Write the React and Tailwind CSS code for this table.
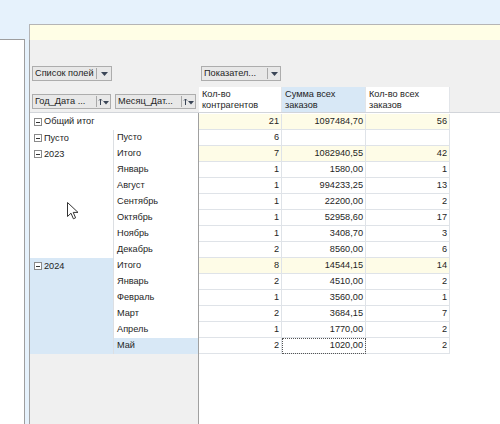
import React from "react";

const groups = [
  { year: "Пусто", months: ["Пусто"] },
  { year: "2023", minus: true, months: ["Итого", "Январь", "Август", "Сентябрь", "Октябрь", "Ноябрь", "Декабрь"] },
  { year: "2024", minus: true, active: true, months: ["Итого", "Январь", "Февраль", "Март", "Апрель", "Май"] },
];

const data = [
  { a: "21", b: "1097484,70", c: "56", total: true },
  { a: "6", b: "", c: "" },
  { a: "7", b: "1082940,55", c: "42", total: true },
  { a: "1", b: "1580,00", c: "1" },
  { a: "1", b: "994233,25", c: "13" },
  { a: "1", b: "22200,00", c: "2" },
  { a: "1", b: "52958,60", c: "17" },
  { a: "1", b: "3408,70", c: "3" },
  { a: "2", b: "8560,00", c: "6" },
  { a: "8", b: "14544,15", c: "14", total: true },
  { a: "2", b: "4510,00", c: "2" },
  { a: "1", b: "3560,00", c: "1" },
  { a: "2", b: "3684,15", c: "7" },
  { a: "1", b: "1770,00", c: "2" },
  { a: "2", b: "1020,00", c: "2", focus: true },
];

function Minus() {
  return (
    <span className="w-[8px] h-[8px] border border-[#8a8a8a] bg-white flex items-center justify-center mr-[2px] shrink-0">
      <span className="w-[4px] h-[1px] bg-[#333]" />
    </span>
  );
}

function Caret() {
  return (
    <svg width="7" height="4" viewBox="0 0 7 4">
      <path d="M0 0h7L3.5 4z" fill="#3b4657" />
    </svg>
  );
}

function SortIcon() {
  return (
    <svg width="12" height="8" viewBox="0 0 12 8">
      <path d="M2.5 1v6M1 2.5l1.5-1.5 1.5 1.5" stroke="#3b4657" strokeWidth="1" fill="none" />
      <path d="M5 3h6L8 6.5z" fill="#3b4657" />
    </svg>
  );
}

function FieldButton({ label, width, sort, sepAt }) {
  return (
    <div className={`${width} h-[15px] flex items-center bg-[#e8e8e8] border border-[#adadad] text-[#1e1e1e]`}>
      <span className={`${sepAt} pl-[2px] truncate leading-[13px]`}>{label}</span>
      <span className="w-[1px] h-[11px] bg-[#a9a9a9]" />
      <span className="flex-1 flex items-center justify-center">{sort ? <SortIcon /> : <Caret />}</span>
    </div>
  );
}

function Cursor() {
  return (
    <svg className="absolute left-[67px] top-[202px]" width="12" height="18" viewBox="0 0 12 18">
      <path d="M0.5 0.5v14l3.5-3.3 2.4 5.6 2.2-1-2.4-5.4h4.8z" fill="white" stroke="#333" strokeWidth="1" />
    </svg>
  );
}

export default function App() {
  return (
    <div className="relative w-[500px] h-[424px] overflow-hidden bg-[#e6f2fc] flex flex-col text-[9.2px] text-[#1e1e1e]" style={{ fontFamily: '"Liberation Sans", Arial, sans-serif' }}>
      <div className="h-[24px] shrink-0" />
      <div className="flex-1 flex min-h-0">
        <div className="w-[25px] mt-[15px] bg-white border-t border-r border-[#9e9e9e]" />
        <div className="flex-1 ml-[4px] flex flex-col min-w-0">
          <div className="h-[16px] bg-[#fffee6] border-t border-l border-[#b5b5b5] shrink-0" />
          <div className="flex-1 bg-[#f0f0f0] border-l border-[#a3a3a3] flex flex-col min-h-0">
            {/* top buttons */}
            <div className="mt-[26px] h-[16px] flex">
              <div className="w-[169px] pl-[2px]">
                <FieldButton label="Список полей" width="w-[80px]" sepAt="w-[63px]" />
              </div>
              <div className="pl-[2px]">
                <FieldButton label="Показател..." width="w-[80px]" sepAt="w-[65px]" />
              </div>
            </div>
            {/* header row */}
            <div className="mt-[5px] h-[25px] flex">
              <div className="w-[169px] flex pt-[7px] pl-[2px] gap-[4px]">
                <FieldButton label="Год_Дата ..." width="w-[79px]" sepAt="w-[63px]" sort />
                <FieldButton label="Месяц_Дат..." width="w-[81px]" sepAt="w-[65px]" sort />
              </div>
              <div className="w-[83px] bg-white border-r border-[#e2e5e9] px-[3px] pt-[2px] leading-[11px]">Кол-во<br />контрагентов</div>
              <div className="w-[84px] bg-[#d8e8f6] border-r border-[#e2e5e9] px-[3px] pt-[2px] leading-[11px]">Сумма всех<br />заказов</div>
              <div className="w-[84px] bg-white border-r border-[#e2e5e9] px-[3px] pt-[2px] leading-[11px]">Кол-во всех<br />заказов</div>
              <div className="flex-1" />
            </div>
            {/* body */}
            <div className="flex-1 flex border-t border-[#d2d5da] min-h-0">
              <div className="w-[169px] border-r border-[#a0a0a0] flex flex-col">
                <div className="bg-white pt-[1px]">
                  <div className="h-[16px] flex items-center pl-[4px]"><Minus />Общий итог</div>
                  {groups.map((g) => (
                    <div key={g.year} className="flex">
                      <div className={`w-[83px] flex items-start pl-[4px] pt-[4px] ${g.active ? "bg-[#d8e8f6]" : ""}`}>
                        <Minus />
                        <span className="leading-[8px]">{g.year}</span>
                      </div>
                      <div className="flex-1 border-l border-[#dcdfe3]">
                        {g.months.map((m, i) => (
                          <div key={m + i} className={`h-[16px] flex items-center pl-[3px] ${g.active && i === g.months.length - 1 ? "bg-[#d8e8f6]" : ""}`}>{m}</div>
                        ))}
                      </div>
                    </div>
                  ))}
                </div>
                <div className="flex-1" />
              </div>
              <div className="flex-1 bg-white pt-[1px]">
                {data.map((r, i) => (
                  <div key={i} className="flex h-[16px]">
                    <div className={`w-[83px] border-r border-b border-[#dfe3e8] flex items-center justify-end pr-[2px] ${r.total ? "bg-[#fefce7]" : ""}`}>{r.a}</div>
                    <div className={`w-[84px] border-r border-b border-[#dfe3e8] flex items-center justify-end pr-[2px] ${r.total ? "bg-[#fefce7]" : ""} ${r.focus ? "outline outline-1 outline-dotted outline-[#555] -outline-offset-1" : ""}`}>{r.b}</div>
                    <div className={`w-[84px] border-r border-b border-[#dfe3e8] flex items-center justify-end pr-[2px] ${r.total ? "bg-[#fefce7]" : ""}`}>{r.c}</div>
                  </div>
                ))}
              </div>
            </div>
          </div>
        </div>
      </div>
      <Cursor />
    </div>
  );
}
